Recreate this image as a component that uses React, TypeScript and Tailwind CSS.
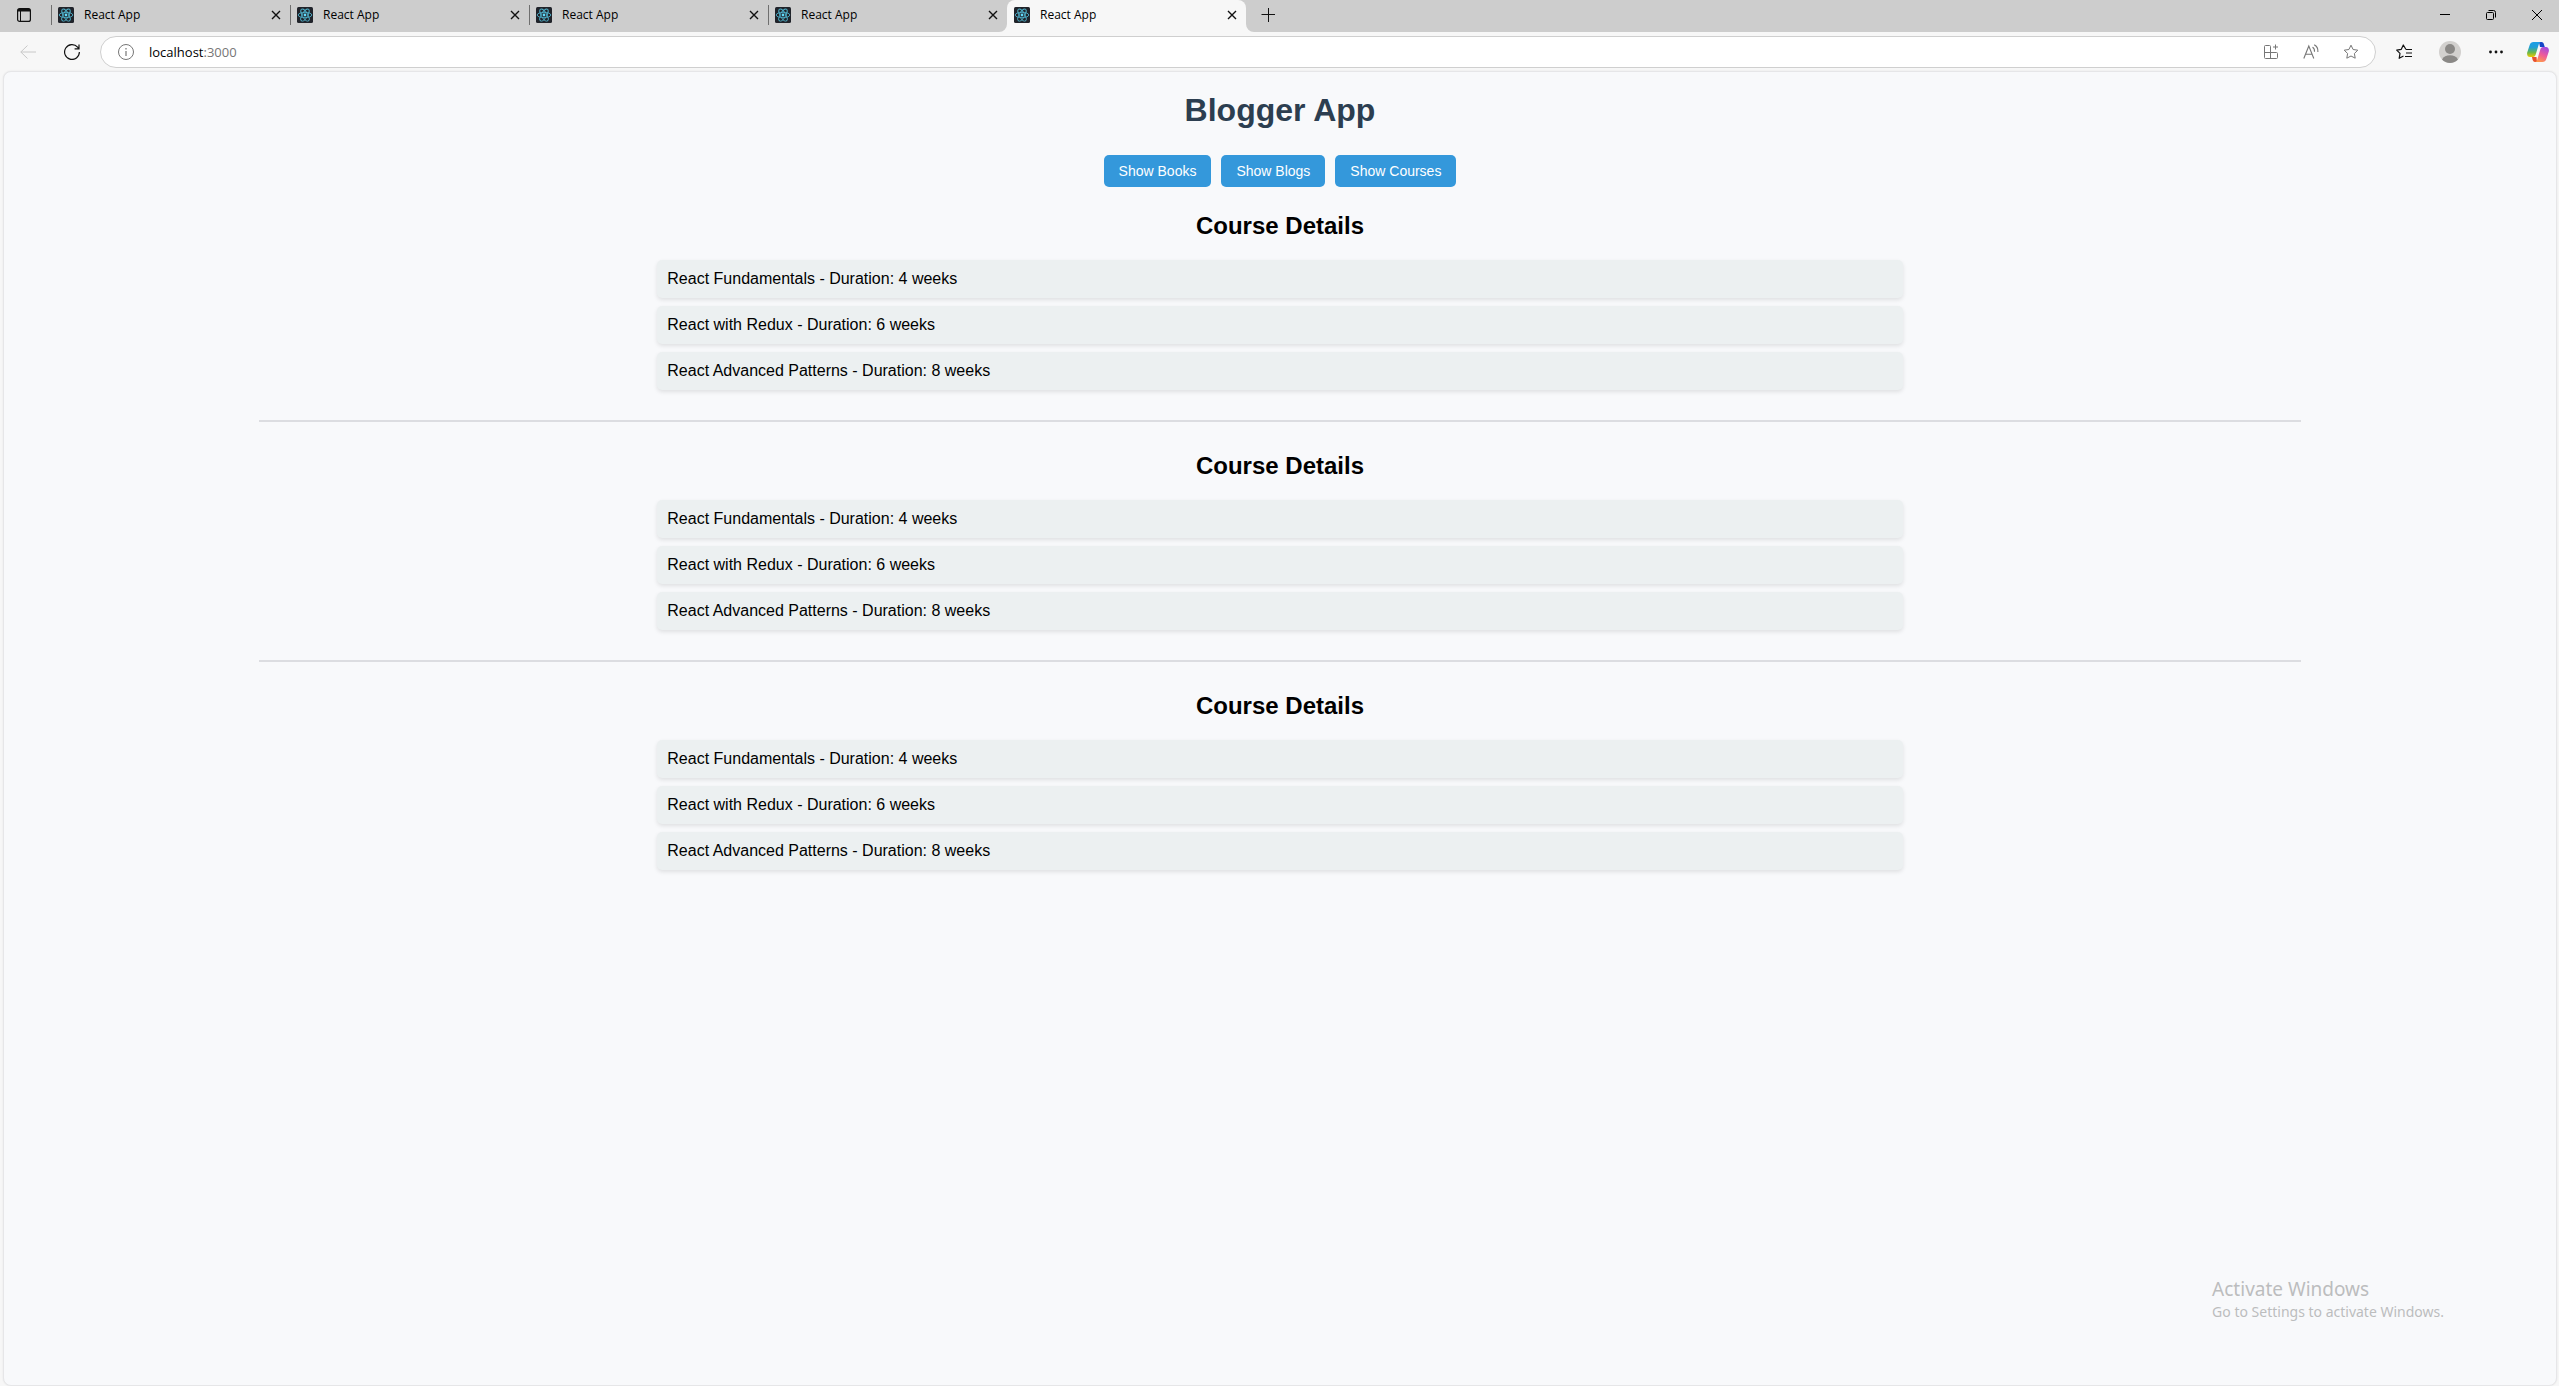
import React from "react";

const courses = [
  { name: "React Fundamentals", weeks: 4 },
  { name: "React with Redux", weeks: 6 },
  { name: "React Advanced Patterns", weeks: 8 },
];

function ReactLogo() {
  return (
    <svg viewBox="0 0 16 16" className="size-4 shrink-0" fill="none" aria-hidden="true">
      <rect width="16" height="16" rx="1.5" fill="#20232a" />
      <g stroke="#4fb0c9" strokeWidth="0.9">
        <ellipse cx="8" cy="8" rx="6.8" ry="2.7" />
        <ellipse cx="8" cy="8" rx="6.8" ry="2.7" transform="rotate(60 8 8)" />
        <ellipse cx="8" cy="8" rx="6.8" ry="2.7" transform="rotate(120 8 8)" />
      </g>
      <circle cx="8" cy="8" r="1.4" fill="#61dafb" />
    </svg>
  );
}

function CloseIcon() {
  return (
    <svg viewBox="0 0 10 10" className="size-[10px]" stroke="#111" strokeWidth="1.4" aria-hidden="true">
      <path d="M1 1l8 8M9 1l-8 8" />
    </svg>
  );
}

function Tab({ active }: { active?: boolean }) {
  return (
    <div
      className={
        active
          ? "relative flex h-8 w-[239px] items-center rounded-t-lg bg-[#f7f7f7] pr-[9px] pb-[2px] pl-[7px]"
          : "flex h-8 w-[239px] items-center pr-[9px] pb-[2px]"
      }
    >
      {active ? (
        <>
          <svg viewBox="0 0 8 8" className="absolute bottom-0 -left-2 size-2" aria-hidden="true">
            <path d="M8 0v8H0a8 8 0 0 0 8-8z" fill="#f7f7f7" />
          </svg>
          <svg viewBox="0 0 8 8" className="absolute -right-2 bottom-0 size-2" aria-hidden="true">
            <path d="M0 0v8h8a8 8 0 0 1-8-8z" fill="#f7f7f7" />
          </svg>
        </>
      ) : (
        <span className="mr-[6px] h-5 w-px bg-[#6f6f6f]" />
      )}
      <ReactLogo />
      <span className="ml-[10px] flex-1 text-xs leading-4">React App</span>
      <button aria-label="Close tab">
        <CloseIcon />
      </button>
    </div>
  );
}

function TabStrip() {
  return (
    <div className="flex h-8 items-center justify-between bg-[#cdcdcd]">
      <div className="flex h-8 items-center">
        <button aria-label="Tab actions" className="mr-[19px] ml-4 pb-[2px]">
          <svg viewBox="0 0 16 16" className="size-4" fill="none" stroke="#111" aria-hidden="true">
            <rect x="1.6" y="1.6" width="12.8" height="12.8" rx="2" strokeWidth="1.2" />
            <path d="M2 3.2h12" strokeWidth="2.6" />
            <path d="M4.500 4v10" strokeWidth="1" />
          </svg>
        </button>
        <Tab />
        <Tab />
        <Tab />
        <Tab />
        <Tab active />
        <button aria-label="New tab" className="ml-[15px] pb-[2px]">
          <svg viewBox="0 0 14 14" className="size-[14px]" stroke="#111" aria-hidden="true">
            <path d="M7.5 0v14M0.500 6.500h13.500" />
          </svg>
        </button>
      </div>
      <div className="flex items-center gap-9 pr-[17px] pb-[2px]">
        <button aria-label="Minimize">
          <svg viewBox="0 0 10 10" className="size-[10px]" stroke="#000" aria-hidden="true">
            <path d="M0 4.500h10" />
          </svg>
        </button>
        <button aria-label="Restore">
          <svg viewBox="0 0 10 10" className="size-[10px]" fill="none" stroke="#000" aria-hidden="true">
            <rect x="0.500" y="2.500" width="7" height="7" rx="1" />
            <path d="M2.500 0.500h5a2 2 0 0 1 2 2v5" />
          </svg>
        </button>
        <button aria-label="Close">
          <svg viewBox="0 0 10 10" className="size-[10px]" stroke="#000" aria-hidden="true">
            <path d="M0 0l10 10M10 0L0 10" />
          </svg>
        </button>
      </div>
    </div>
  );
}

function Copilot() {
  return (
    <svg viewBox="0 0 22 20" className="h-5 w-[22px]" aria-hidden="true">
      <defs>
        <linearGradient id="cpA" x1="0" y1="0" x2="0" y2="1">
          <stop offset="0" stopColor="#1b9de6" />
          <stop offset="0.35" stopColor="#1d9fd8" />
          <stop offset="0.7" stopColor="#6cb84a" />
          <stop offset="1" stopColor="#f0c800" />
        </linearGradient>
        <linearGradient id="cpB" x1="0.700" y1="0" x2="0.300" y2="1">
          <stop offset="0" stopColor="#a24be0" />
          <stop offset="0.5" stopColor="#ee5a9a" />
          <stop offset="1" stopColor="#ff9a4a" />
        </linearGradient>
      </defs>
      <path d="M12 0h2.500c1.500 0 2 1 2.400 2.200L17.800 5H13z" fill="#1546c8" />
      <path d="M10 20H8c-1.500 0-2-1-2.400-2.200L5 15h4.500z" fill="#e8502e" />
      <path d="M6.500 0H14c-1.200 0-1.800 1-2.200 2.300L8.700 12.500C8.200 14 7.500 15 6 15H3C.8 15-.3 13 .2 10.500L2.600 3.200C3.300 1 4.600 0 6.500 0z" fill="url(#cpA)" />
      <path d="M15.500 20H8c1.200 0 1.800-1 2.200-2.300l3.100-10.200C13.800 6 14.500 5 16 5h3c2.200 0 3.300 2 2.800 4.500l-2.400 7.300c-.7 2.200-2 3.200-3.900 3.200z" fill="url(#cpB)" />
    </svg>
  );
}

const STAR = "M8 1.200l2.100 4.300 4.700.7-3.400 3.300.8 4.700L8 12l-4.200 2.200.8-4.700L1.200 6.200l4.700-.7z";

function Toolbar() {
  return (
    <div className="flex h-[39px] items-center bg-[#f7f7f7] pr-[10px] pl-5">
      <button aria-label="Back" className="mr-7">
        <svg viewBox="0 0 16 16" className="size-4" fill="none" stroke="#c8c8c8" aria-hidden="true">
          <path d="M16 8H0.800M7.500 1.500L0.800 8l6.700 6.500" />
        </svg>
      </button>
      <button aria-label="Refresh" className="mr-5">
        <svg viewBox="0 0 16 16" className="size-4" fill="none" stroke="#111" strokeWidth="1.200" aria-hidden="true">
          <path d="M15.400 8A7.400 7.400 0 1 1 13.600 3.200L14.800 4.700M15 .5v4.400h-4.400" />
        </svg>
      </button>
      <div className="flex h-8 flex-1 items-center rounded-full border border-[#cfcfcf] bg-white pr-4 pl-[17px]">
        <button aria-label="View site information" className="mr-[15px]">
          <svg viewBox="0 0 16 16" className="size-4" fill="none" stroke="#767676" aria-hidden="true">
            <circle cx="8" cy="8" r="7.500" />
            <path d="M8 7v5M8 4v1.500" strokeWidth="1.200" />
          </svg>
        </button>
        <p className="flex-1 text-[13px] leading-4">
          localhost<span className="text-[#767676]">:3000</span>
        </p>
        <div className="flex items-center gap-6 text-[#767676]">
          <button aria-label="Apps">
            <svg viewBox="0 0 16 16" className="size-4" fill="none" stroke="currentColor" aria-hidden="true">
              <path d="M7.500 8.500v-6a1 1 0 0 0-1-1h-4a1 1 0 0 0-1 1v11a1 1 0 0 0 1 1h11a1 1 0 0 0 1-1v-4a1 1 0 0 0-1-1h-12M7.500 8.500v6M12.500.5v5M10 3h5" />
            </svg>
          </button>
          <button aria-label="Read aloud">
            <svg viewBox="0 0 16 16" className="size-4" fill="none" stroke="currentColor" strokeWidth="1.100" aria-hidden="true">
              <path d="M.8 14.500L5.800 2l5 12.500M2.500 10.200h6.600M9.500 3.200c1.500.8 2.200 2.200 2 4.500M11.200.8c2.700 1.400 4 3.800 3.700 7.200" />
            </svg>
          </button>
          <button aria-label="Add to favorites">
            <svg viewBox="0 0 16 16" className="size-4" fill="none" stroke="currentColor" strokeLinejoin="round" aria-hidden="true">
              <path d={STAR} />
            </svg>
          </button>
        </div>
      </div>
      <button aria-label="Favorites" className="ml-5">
        <svg viewBox="0 0 16 16" className="size-4" fill="none" stroke="#111" strokeWidth="1.200" strokeLinejoin="round" aria-hidden="true">
          <path d="M10 5.500L7.300 1 5.300 5.300l-4.600.8L4 9.400l-.8 4.900L7.500 12M10 5.500h6M10 9h6M9 12.500h7" />
        </svg>
      </button>
      <button aria-label="Profile" className="ml-[27px]">
        <svg viewBox="0 0 22 22" className="size-[22px]" aria-hidden="true">
          <circle cx="11" cy="11" r="11" fill="#d2d0ce" />
          <circle cx="11" cy="8" r="5" fill="#8a8886" />
          <path d="M3 18.500C4.500 15.500 7.500 14.300 11 14.300s6.500 1.200 8 4.200A11 11 0 0 1 3 18.500z" fill="#8a8886" />
        </svg>
      </button>
      <button aria-label="Settings and more" className="ml-7">
        <svg viewBox="0 0 14 4" className="h-1 w-[14px]" fill="#111" aria-hidden="true">
          <circle cx="1.500" cy="2" r="1.400" />
          <circle cx="7" cy="2" r="1.400" />
          <circle cx="12.500" cy="2" r="1.400" />
        </svg>
      </button>
      <button aria-label="Copilot" className="ml-6">
        <Copilot />
      </button>
    </div>
  );
}

function CourseSection() {
  return (
    <section className="pb-[30px]">
      <h2 className="text-center text-2xl leading-7 font-bold">Course Details</h2>
      <ul className="mx-auto mt-5 flex w-[61%] flex-col gap-2">
        {courses.map((c) => (
          <li key={c.name} className="rounded-[5px] bg-[#ecf0f1] p-[10px] text-base leading-[18px] shadow-[0_2px_4px_rgba(0,0,0,0.1)]">
            {`${c.name} - Duration: ${c.weeks} weeks`}
          </li>
        ))}
      </ul>
    </section>
  );
}

function Divider() {
  return <hr className="mb-[30px] h-[2px] border-0 bg-[#dcdde1]" />;
}

function ShowButton({ children }: { children: string }) {
  return (
    <button className="rounded-[5px] bg-[#3498db] px-[15px] py-2 text-sm leading-4 text-white">{children}</button>
  );
}

export default function App() {
  return (
    <div className="flex min-h-screen flex-col bg-[#f7f7f7] font-['Open_Sans','Noto_Sans',sans-serif] text-black">
      <TabStrip />
      <Toolbar />
      <main className="relative mr-[2px] ml-[3px] flex-1 rounded-lg border border-[#e6e6e8] bg-[#f8f9fb] font-['Liberation_Sans',Arial,sans-serif] shadow-[0_0_2px_rgba(0,0,0,0.08)]">
        <div className="mx-auto w-4/5">
          <h1 className="pt-5 text-center text-[32px] leading-9 font-bold text-[#2c3e50]">Blogger App</h1>
          <div className="mt-[27px] mb-[25px] flex justify-center gap-[10px]">
            <ShowButton>Show Books</ShowButton>
            <ShowButton>Show Blogs</ShowButton>
            <ShowButton>Show Courses</ShowButton>
          </div>
          <CourseSection />
          <Divider />
          <CourseSection />
          <Divider />
          <CourseSection />
        </div>
        <aside className="absolute right-[112px] bottom-[62px] font-['Noto_Sans','Open_Sans',sans-serif] text-[#bcbdbe]">
          <p className="text-[19px] leading-6">Activate Windows</p>
          <p className="text-sm leading-[22px]">Go to Settings to activate Windows.</p>
        </aside>
      </main>
    </div>
  );
}
